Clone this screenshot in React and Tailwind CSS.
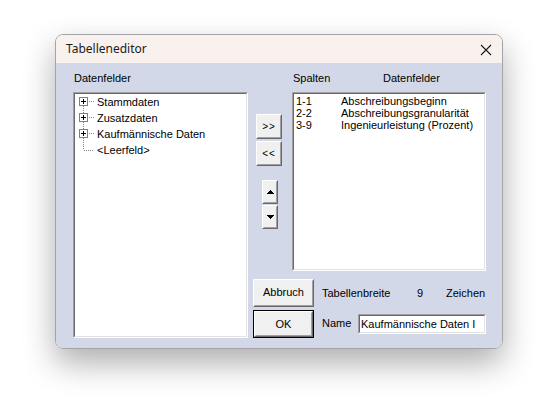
const sunken =
  'border border-t-[#a0a0a0] border-l-[#a0a0a0] border-b-white border-r-white';
const sunkenInner =
  'border border-t-[#696969] border-l-[#696969] border-b-[#e3e3e3] border-r-[#e3e3e3]';
const raised =
  'border border-t-white border-l-white border-b-[#696969] border-r-[#696969]';
const raisedInner =
  'border border-t-[#f0f0f0] border-l-[#f0f0f0] border-b-[#a0a0a0] border-r-[#a0a0a0]';

const TreeIcon = ({ last, first }) => (
  <svg width="21" height="16" shapeRendering="crispEdges" className="shrink-0">
    {!first && (
      <line x1="7.5" y1="0" x2="7.5" y2={last ? 8 : 3} stroke="#808080" strokeDasharray="1 1" />
    )}
    {last ? (
      <line x1="8" y1="8.5" x2="18" y2="8.5" stroke="#808080" strokeDasharray="1 1" />
    ) : (
      <>
        <rect x="3.5" y="3.5" width="8" height="8" fill="white" stroke="#808080" />
        <line x1="5" y1="7.5" x2="10" y2="7.5" stroke="#000" />
        <line x1="7.5" y1="5" x2="7.5" y2="10" stroke="#000" />
        <line x1="13" y1="7.5" x2="18" y2="7.5" stroke="#808080" strokeDasharray="1 1" />
        <line x1="7.5" y1="12" x2="7.5" y2="16" stroke="#808080" strokeDasharray="1 1" />
      </>
    )}
  </svg>
);

const Btn = ({ className, children }) => (
  <div className={`${raised} bg-[#f0f0f0] ${className}`}>
    <div className={`${raisedInner} w-full h-full flex items-center justify-center`}>
      {children}
    </div>
  </div>
);

const treeItems = ['Stammdaten', 'Zusatzdaten', 'Kaufmännische Daten', '<Leerfeld>'];

const columns = [
  ['1-1', 'Abschreibungsbeginn'],
  ['2-2', 'Abschreibungsgranularität'],
  ['3-9', 'Ingenieurleistung (Prozent)'],
];

export default function App() {
  return (
    <div
      className="w-[542px] h-[402px] bg-white pt-[34px] pl-[55px] overflow-hidden text-[11px] text-black"
      style={{ fontFamily: '"Liberation Sans", Arial, sans-serif' }}
    >
      <div className="w-[448px] h-[315px] rounded-[8px] border border-[#a4a4a8] overflow-hidden flex flex-col shadow-[0_14px_32px_rgba(0,0,0,0.32)]">
        {/* title bar */}
        <div className="h-[28px] bg-[#f9f1ee] flex items-center justify-between pl-[10px] pr-[10px] shrink-0">
          <span className="text-[12px] text-[#1a1a1a]" style={{ fontFamily: '"Noto Sans", "Open Sans", sans-serif' }}>
            Tabelleneditor
          </span>
          <svg width="12" height="12" viewBox="0 0 12 12" className="mt-[2px]">
            <path d="M1 1 L11 11 M11 1 L1 11" stroke="#1a1a1a" strokeWidth="1.1" />
          </svg>
        </div>

        {/* body */}
        <div className="flex-1 bg-[#d3d8e8] flex pl-[17px] pt-[9px]">
          {/* left column */}
          <div className="w-[175px] flex flex-col">
            <div className="h-[20px] leading-[13px] pl-[1px]">Datenfelder</div>
            <div className={`${sunken} h-[246px] bg-white`}>
              <div className={`${sunkenInner} h-full pl-[1px]`}>
                {treeItems.map((t, i) => (
                  <div key={t} className="flex items-center h-[16px]">
                    <TreeIcon first={i === 0} last={i === treeItems.length - 1} />
                    <span className="leading-[16px]">{t}</span>
                  </div>
                ))}
              </div>
            </div>
          </div>

          {/* right area */}
          <div className="ml-[5px] w-[233px] flex flex-col">
            <div className="flex">
              {/* move buttons */}
              <div className="w-[39px] flex flex-col pt-[42px]">
                <Btn className="ml-[3px] w-[26px] h-[25px]">
                  <span className="text-[10px] tracking-[1px] pb-[1px]">&gt;&gt;</span>
                </Btn>
                <Btn className="ml-[3px] mt-[2px] w-[26px] h-[25px]">
                  <span className="text-[10px] tracking-[1px] pb-[1px]">&lt;&lt;</span>
                </Btn>
                <Btn className="ml-[9px] mt-[14px] w-[16px] h-[24px]">
                  <svg width="7" height="4" shapeRendering="crispEdges">
                    <path d="M3.5 0 L7 4 L0 4 Z" fill="#000" />
                  </svg>
                </Btn>
                <Btn className="ml-[9px] mt-[1px] w-[16px] h-[24px]">
                  <svg width="7" height="4" shapeRendering="crispEdges">
                    <path d="M0 0 L7 0 L3.5 4 Z" fill="#000" />
                  </svg>
                </Btn>
              </div>

              {/* column list */}
              <div className="w-[194px] flex flex-col">
                <div className="h-[20px] leading-[13px] flex pl-[1px]">
                  <span className="w-[90px]">Spalten</span>
                  <span>Datenfelder</span>
                </div>
                <div className={`${sunken} h-[179px] bg-white`}>
                  <div className={`${sunkenInner} h-full pl-[2px] pt-[1px]`}>
                    {columns.map(([c, n]) => (
                      <div key={c} className="flex leading-[12px]">
                        <span className="w-[45px]">{c}</span>
                        <span>{n}</span>
                      </div>
                    ))}
                  </div>
                </div>
              </div>
            </div>

            {/* bottom rows */}
            <div className="flex items-center mt-[8px]">
              <Btn className="w-[61px] h-[28px]">
                <span className="pb-[2px]">Abbruch</span>
              </Btn>
              <span className="ml-[8px] w-[95px]">Tabellenbreite</span>
              <span className="w-[29px]">9</span>
              <span>Zeichen</span>
            </div>
            <div className="flex items-center mt-[3px]">
              <div className="border border-black w-[61px] h-[28px]">
                <Btn className="w-full h-full">
                  <span>OK</span>
                </Btn>
              </div>
              <span className="ml-[8px] w-[36px] mb-[2px]">Name</span>
              <div className={`${sunken} w-[128px] h-[20px] bg-white`}>
                <div className={`${sunkenInner} h-full pl-[1px] leading-[16px] whitespace-nowrap overflow-hidden`}>
                  Kaufmännische Daten I
                </div>
              </div>
            </div>
          </div>
        </div>
      </div>
    </div>
  );
}
